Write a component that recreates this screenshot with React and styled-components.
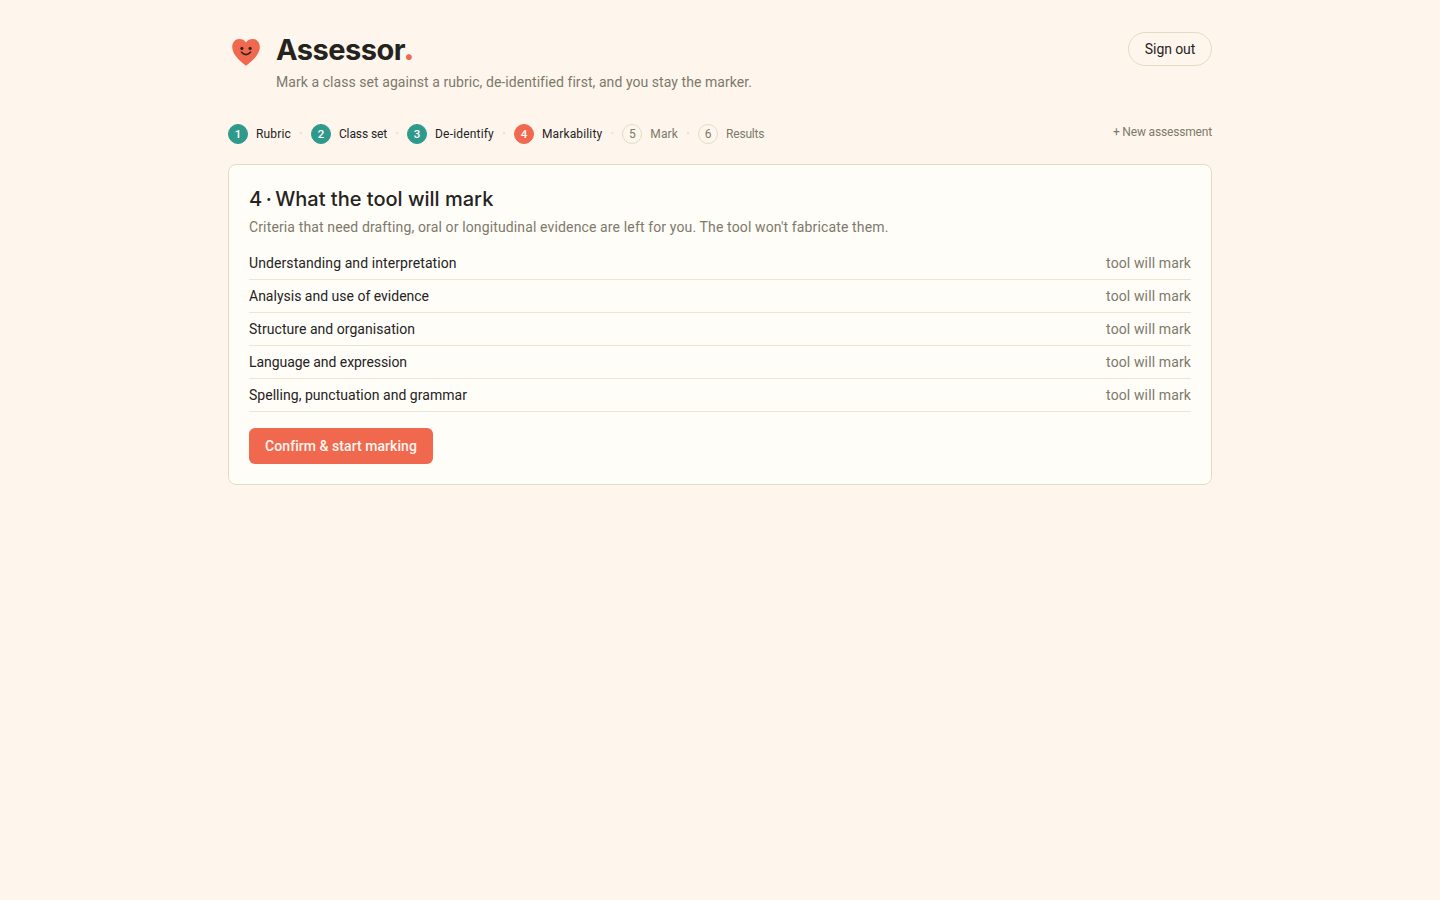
import React from 'react';
import styled, { createGlobalStyle } from 'styled-components';

const steps = [
  { label: 'Rubric', state: 'done', track: 0.15 },
  { label: 'Class set', state: 'done', track: -0.11 },
  { label: 'De-identify', state: 'done', track: 0.18 },
  { label: 'Markability', state: 'current', track: 0.14 },
  { label: 'Mark', state: 'todo', track: 0.15 },
  { label: 'Results', state: 'todo', track: -0.19 },
];

const criteria = [
  { name: 'Understanding and interpretation', track: 0.09 },
  { name: 'Analysis and use of evidence', track: 0 },
  { name: 'Structure and organisation', track: 0.04 },
  { name: 'Language and expression', track: -0.06 },
  { name: 'Spelling, punctuation and grammar', track: 0.03 },
];

export default function App() {
  return (
    <>
      <GlobalStyle />
      <Page>
        <Header>
          <Brand>
            <Heart />
            <div>
              <Title>Assessor<Stop>.</Stop></Title>
              <Tagline>Mark a class set against a rubric, de-identified first, and you stay the marker.</Tagline>
            </div>
          </Brand>
          <SignOut>Sign out</SignOut>
        </Header>

        <Nav>
          <Steps>
            {steps.map((step, i) => (
              <React.Fragment key={step.label}>
                {i > 0 && <Separator>·</Separator>}
                <Step>
                  <Badge $state={step.state}>{i + 1}</Badge>
                  <StepLabel $state={step.state} $track={step.track}>{step.label}</StepLabel>
                </Step>
              </React.Fragment>
            ))}
          </Steps>
          <NewLink>+ New assessment</NewLink>
        </Nav>

        <Card>
          <CardTitle><Prefix>4 · </Prefix>What the tool will mark</CardTitle>
          <CardText>Criteria that need drafting, oral or longitudinal evidence are left for you. The tool won't fabricate them.</CardText>
          <List>
            {criteria.map((c) => (
              <Row key={c.name}>
                <Name $track={c.track}>{c.name}</Name>
                <Verdict>tool will mark</Verdict>
              </Row>
            ))}
          </List>
          <Primary>Confirm &amp; start marking</Primary>
        </Card>
      </Page>
    </>
  );
}

const Heart = () => (
  <HeartSvg viewBox="0 0 36 36" aria-hidden="true">
    <path
      d="M18 31.8 C15.6 29.4 4.2 22.2 4.2 13 C4.2 8.4 7.4 5 11.2 5 C14.2 5 16.7 6.2 18 8.4 C19.3 6.2 21.8 5 24.8 5 C28.6 5 31.8 8.4 31.8 13 C31.8 22.2 20.4 29.4 18 31.8 Z"
      fill="#f0694f"
    />
    <circle cx="13.9" cy="14.4" r="1.6" fill="#2b2620" />
    <circle cx="22.1" cy="14.4" r="1.6" fill="#2b2620" />
    <path d="M13.5 18.2 Q18 23 22.5 18.2" fill="none" stroke="#2b2620" strokeWidth="1.6" strokeLinecap="round" />
  </HeartSvg>
);

const GlobalStyle = createGlobalStyle`
  * {
    box-sizing: border-box;
  }
  body {
    margin: 0;
    background: #fef6ec;
    color: #25231e;
    font-family: Roboto, 'Liberation Sans', sans-serif;
    font-size: 14px;
    line-height: 20px;
  }
  h1, h2, p, ul {
    margin: 0;
    padding: 0;
  }
  button {
    font: inherit;
    cursor: pointer;
  }
`;
const Page = styled.main`
  width: 984px;
  margin: 0 auto;
  padding-top: 32px;
`;
const Header = styled.header`
  display: flex;
  justify-content: space-between;
  align-items: flex-start;
  height: 92px;
`;
const Brand = styled.div`
  display: flex;
  gap: 12px;
`;
const HeartSvg = styled.svg`
  width: 36px;
  height: 36px;
  margin-top: 2px;
`;
const Title = styled.h1`
  height: 36px;
  font-family: Inter, 'Liberation Sans', sans-serif;
  font-size: 29px;
  font-weight: 750;
  line-height: 36px;
  letter-spacing: -0.5px;
`;
const Stop = styled.span`
  color: #f0694f;
  font-size: 34px;
  line-height: 0;
  margin-left: -2px;
`;
const Tagline = styled.p`
  margin-top: 4px;
  color: #7d796b;
  letter-spacing: 0.06px;
`;
const SignOut = styled.button`
  width: 84px;
  height: 34px;
  padding: 0;
  border: 1px solid #e3dcc4;
  border-radius: 17px;
  background: transparent;
  color: #25231e;
  letter-spacing: -0.1px;
`;
const Nav = styled.nav`
  display: flex;
  justify-content: space-between;
  margin-bottom: 20px;
`;
const Steps = styled.div`
  display: flex;
  align-items: center;
  height: 20px;
`;
const Step = styled.div`
  display: flex;
  align-items: center;
  gap: 8px;
`;
const Separator = styled.span`
  width: 20px;
  color: #e3dcc4;
  font-size: 12px;
  font-weight: 700;
  text-align: center;
`;
const fills = { done: '#2f9a8c', current: '#f0694f', todo: 'transparent' };
const Badge = styled.span`
  display: flex;
  align-items: center;
  justify-content: center;
  width: 20px;
  height: 20px;
  border: 1px solid ${(p) => (p.$state === 'todo' ? '#e3dcc4' : fills[p.$state])};
  border-radius: 50%;
  background: ${(p) => fills[p.$state]};
  color: ${(p) => (p.$state === 'todo' ? '#7d796b' : '#fffdf8')};
  font-size: ${(p) => (p.$state === 'todo' ? 12 : 11.5)}px;
  font-weight: ${(p) => (p.$state === 'todo' ? 400 : 500)};
`;
const StepLabel = styled.span`
  color: ${(p) => (p.$state === 'todo' ? '#7d796b' : '#25231e')};
  font-size: 12px;
  letter-spacing: ${(p) => p.$track}px;
`;
const NewLink = styled.a`
  color: #7d796b;
  font-size: 12px;
  line-height: 16px;
  letter-spacing: -0.17px;
`;
const Card = styled.section`
  padding: 20px;
  border: 1px solid #e3dcc4;
  border-radius: 8px;
  background: #fffdf8;
`;
const CardTitle = styled.h2`
  font-family: Inter, 'Liberation Sans', sans-serif;
  font-size: 20px;
  font-weight: 500;
  line-height: 29px;
`;
const Prefix = styled.span`
  word-spacing: -1.8px;
`;
const CardText = styled.p`
  margin: 3px 0 10px;
  color: #7d796b;
  letter-spacing: 0.134px;
  white-space: nowrap;
`;
const List = styled.ul`
  list-style: none;
`;
const Row = styled.li`
  display: flex;
  justify-content: space-between;
  padding: 6px 0;
  border-bottom: 1px solid #ece6d4;
`;
const Name = styled.span`
  letter-spacing: ${(p) => p.$track}px;
`;
const Verdict = styled.span`
  color: #7d796b;
  letter-spacing: 0.12px;
`;
const Primary = styled.button`
  display: block;
  width: 184px;
  height: 36px;
  margin-top: 16px;
  padding: 0;
  border: none;
  border-radius: 6px;
  background: #f0694f;
  color: #fff6ee;
  font-weight: 500;
  letter-spacing: 0.05px;
`;
